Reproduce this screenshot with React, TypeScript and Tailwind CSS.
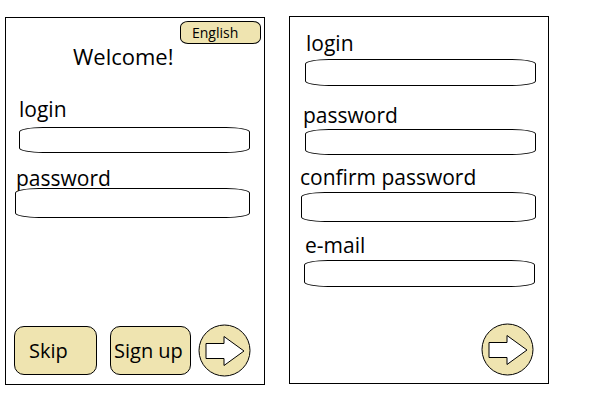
import React from "react";

const fieldShape = "h-[26px] border border-black bg-white rounded-[24px/5px]";

function ArrowButton() {
    return (
        <svg width="53" height="53" viewBox="0 0 53 53">
            <circle cx="26.5" cy="26.5" r="25.5" fill="#efe4b0" stroke="#000" strokeWidth="1" />
            <polygon
                points="8,19.5 26,19.5 26,12.5 46,27 26,41.5 26,34.5 8,34.5"
                fill="#fff"
                stroke="#000"
                strokeWidth="1"
            />
        </svg>
    );
}

function Label({ text, className }: { text: string; className: string }) {
    return <div className={`text-[21px] leading-[24px] text-black ${className}`}>{text}</div>;
}

export default function App() {
    return (
        <div className="w-[591px] h-[416px] bg-white flex items-start pl-[5px] pt-[16px] gap-[24px] font-['Open_Sans',sans-serif]">
            {/* Welcome screen */}
            <div className="w-[260px] h-[368px] mt-px border border-black flex flex-col">
                <div className="flex justify-end pr-[3px] pt-[3px]">
                    <button className="w-[81px] h-[23px] border border-black bg-[#efe4b0] rounded-[8px/6px] text-[14px] leading-[21px] text-black text-left pl-[11px]">
                        English
                    </button>
                </div>
                <div className="pl-[67px] mt-[-2px] text-[22px] leading-[28px] text-black">Welcome!</div>
                <Label text="login" className="pl-[13px] mt-[27px]" />
                <div className={`${fieldShape} ml-[13px] w-[231px] mt-[6px]`} />
                <Label text="password" className="pl-[10px] mt-[13px]" />
                <div className={`${fieldShape} ml-[9px] w-[235px] mt-[-2px] h-[30px]`} />
                <div className="flex-1" />
                <div className="flex items-center pl-[8px] pb-[7px]">
                    <button className="w-[83px] h-[49px] border border-black bg-[#efe4b0] rounded-[10px] text-[20px] text-black text-left pl-[14px]">
                        Skip
                    </button>
                    <button className="w-[81px] h-[49px] ml-[13px] border border-black bg-[#efe4b0] rounded-[10px] text-[20px] text-black text-left pl-[3px]">
                        Sign up
                    </button>
                    <div className="ml-[7px]">
                        <ArrowButton />
                    </div>
                </div>
            </div>

            {/* Sign up screen */}
            <div className="w-[260px] h-[368px] border border-black flex flex-col">
                <Label text="login" className="pl-[16px] mt-[14px]" />
                <div className={`${fieldShape} ml-[15px] w-[231px] mt-[4px] h-[27px]`} />
                <Label text="password" className="pl-[13px] mt-[17px]" />
                <div className={`${fieldShape} ml-[15px] w-[231px] mt-[2px]`} />
                <Label text="confirm password" className="pl-[10px] mt-[10px]" />
                <div className={`${fieldShape} ml-[11px] w-[235px] mt-[3px] h-[30px]`} />
                <Label text="e-mail" className="pl-[15px] mt-[11px]" />
                <div className={`${fieldShape} ml-[14px] w-[231px] mt-[3px] h-[27px]`} />
                <div className="flex-1" />
                <div className="flex justify-end pr-[14px] pb-[7px]">
                    <ArrowButton />
                </div>
            </div>
        </div>
    );
}
